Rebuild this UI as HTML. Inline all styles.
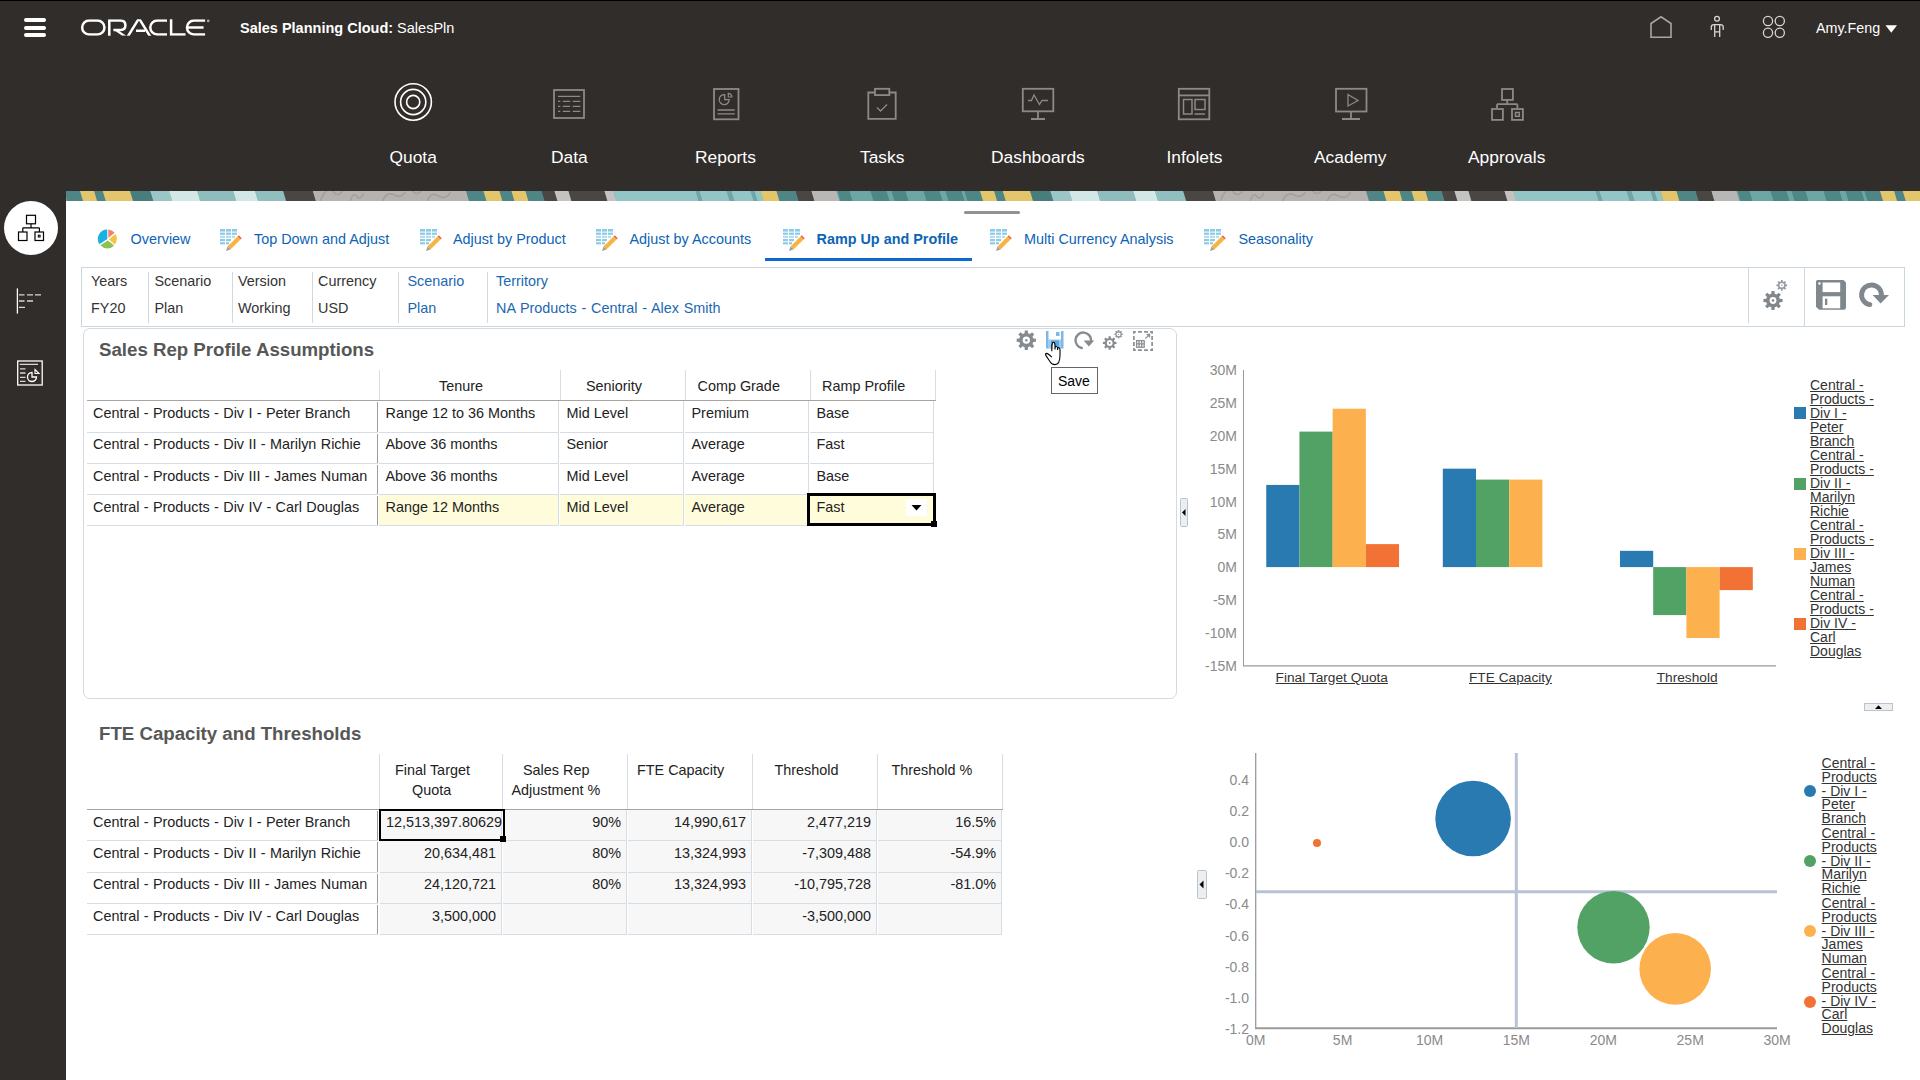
<!DOCTYPE html>
<html><head><meta charset="utf-8">
<style>
*{box-sizing:border-box}
html,body{margin:0;padding:0}
body{width:1920px;height:1080px;position:relative;overflow:hidden;background:#312d2a;font-family:"Liberation Sans",sans-serif;color:#000}
.a{position:absolute}
.t{position:absolute;white-space:nowrap;line-height:1}
svg{position:absolute;overflow:visible}
.nav{color:#fff;font-size:17.4px}
.tab{color:#0d63b5;font-size:14.4px}
.pov{font-size:14.4px;color:#333}
.cell{font-size:14.4px;color:#222}
</style></head><body>
<!-- top black line -->
<div class="a" style="left:0;top:0;width:1920px;height:1px;background:#000"></div>
<!-- hamburger -->
<div class="a" style="left:24px;top:18px;width:22px;height:4px;border-radius:2px;background:#fff"></div>
<div class="a" style="left:24px;top:25.5px;width:22px;height:4px;border-radius:2px;background:#fff"></div>
<div class="a" style="left:24px;top:33px;width:22px;height:4px;border-radius:2px;background:#fff"></div>
<!-- ORACLE logo -->
<svg style="left:0;top:0" width="260" height="60" fill="none" stroke="#fff" stroke-width="2.5">
<defs><clipPath id="lc"><rect x="70" y="19.3" width="150" height="16.4"/></clipPath></defs>
<g clip-path="url(#lc)">
<rect x="82.15" y="20.55" width="22.3" height="13.85" rx="6.9"/>
<path d="M109.3 36 V20.55 H120.6 Q125.4 20.55 125.4 25.3 Q125.4 30 120.6 30 H113.5"/>
<path d="M112.8 29.2 H116.6 L126.3 35.8 H122.2 Z" fill="#fff" stroke="none"/>
<path d="M127.5 37 L139 18.4 L150.5 37" stroke-linejoin="miter"/>
<path d="M136 30.8 H145.2"/>
<path d="M167 20.55 H157.2 A6.92 6.92 0 0 0 157.2 34.4 H167"/>
<path d="M171.1 19 V34.4 H185.5"/>
<path d="M205.1 20.55 H193.9 A6.92 6.92 0 0 0 193.9 34.4 H205.1 M187.2 27.6 H203.6"/>
</g>
<circle cx="208.2" cy="20.9" r="1.3" fill="#aaa" stroke="none"/>
</svg>
<div class="t" style="left:240px;top:21px;font-size:14.5px;color:#fff"><b>Sales Planning Cloud:</b> SalesPln</div>
<!-- header right icons -->
<svg style="left:0;top:0" width="1920" height="60" fill="none" stroke="#a9a5a1" stroke-width="1.6">
<path d="M1651 37.2 V23.5 L1661 16.8 L1671 23.5 V37.2 Z"/>
<circle cx="1717" cy="18.8" r="2.4" stroke="#d8d5d2" stroke-width="1.3"/>
<path d="M1711.3 30 V27 Q1711.3 24.6 1714 24.6 H1720.4 Q1723.2 24.6 1723.2 27 V30" stroke="#d8d5d2" stroke-width="1.3"/>
<path d="M1714.7 24.6 V37 M1719.7 24.6 V37 M1714.7 31.8 H1719.7" stroke="#d8d5d2" stroke-width="1.3"/>
<circle cx="1768" cy="21" r="4.6" stroke="#d8d5d2" stroke-width="1.3"/>
<circle cx="1779.8" cy="21" r="4.6" stroke="#d8d5d2" stroke-width="1.3"/>
<circle cx="1768" cy="32.8" r="4.6" stroke="#d8d5d2" stroke-width="1.3"/>
<circle cx="1779.8" cy="32.8" r="4.6" stroke="#d8d5d2" stroke-width="1.3"/>
<path d="M1885.5 25.3 H1897 L1891.25 32.8 Z" fill="#fff" stroke="none"/>
</svg>
<div class="t" style="left:1816px;top:20.5px;font-size:14.3px;color:#fff">Amy.Feng</div>

<!-- NAV ICONS -->
<svg style="left:0;top:0" width="1920" height="190" fill="none" stroke="#8e8985" stroke-width="1.8">
<g stroke="#fff" stroke-width="1.6">
<circle cx="413.2" cy="102" r="18.2"/><circle cx="413.2" cy="102" r="12.6"/><circle cx="413.2" cy="102" r="6.6"/>
</g>
<!-- Data -->
<rect x="554" y="90" width="30" height="28"/>
<path d="M558 96.4 H580.3 M558 101.4 H560.3 M562.8 101.4 H570.2 M572.7 101.4 H580.3 M558 106.4 H560.3 M562.8 106.4 H570.2 M572.7 106.4 H580.3 M558 111.4 H560.3 M562.8 111.4 H570.2 M572.7 111.4 H580.3" stroke-width="1.3"/>
<!-- Reports -->
<rect x="714" y="89" width="24.5" height="30.3"/>
<path d="M729.2 99.7 A5 5 0 1 1 724.7 94.7 V99.7 Z" stroke-width="1.3"/>
<path d="M728.3 97 V93.4 A3.6 3.6 0 0 1 731.9 97 Z" stroke-width="1.2"/>
<path d="M717.5 110 H734.8 M717.5 113.8 H734.8" stroke-width="1.3"/>
<!-- Tasks -->
<path d="M874.5 92.5 H868.3 V118.8 H895.7 V92.5 H889.5"/>
<rect x="875" y="88.8" width="14.3" height="6.3"/>
<path d="M877 107.5 L880.5 111 L887 104.5" stroke-width="1.3"/>
<!-- Dashboards -->
<rect x="1022.8" y="88.8" width="30.5" height="22.5"/>
<path d="M1038 111.5 V119 M1031 119 H1045"/>
<path d="M1028 100.5 H1031.5 L1034 95 L1039.5 104.5 L1042 100.5 H1048" stroke-width="1.3"/>
<!-- Infolets -->
<rect x="1178.8" y="88.8" width="30.5" height="30.5"/>
<path d="M1178.8 95.4 H1209.3"/>
<rect x="1183.5" y="99.5" width="8.5" height="14.5" stroke-width="1.5"/>
<rect x="1195" y="99.5" width="10" height="10" stroke-width="1.5"/>
<path d="M1194.5 114 H1205" stroke-width="1.5"/>
<!-- Academy -->
<rect x="1336" y="88.8" width="30.5" height="22.7"/>
<path d="M1351 111.5 V119 M1342 119 H1360"/>
<path d="M1348 94.5 L1358 100.5 L1348 106 Z" stroke-width="1.3"/>
<!-- Approvals -->
<rect x="1502" y="89" width="10.9" height="10.9"/>
<rect x="1492" y="109" width="10.9" height="10.9"/>
<rect x="1512" y="109" width="10.9" height="10.9"/>
<path d="M1507.2 100 V104.2 M1497 104.2 H1517.4 M1497 104.2 V108 M1517.4 104.2 V108"/>
<rect x="1515.5" y="112.5" width="3.8" height="3.8" stroke-width="1.5"/>
</svg>
<div class="t nav" style="left:389.5px;top:148.5px">Quota</div>
<div class="t nav" style="left:551px;top:148.5px">Data</div>
<div class="t nav" style="left:695px;top:148.5px">Reports</div>
<div class="t nav" style="left:860px;top:148.5px">Tasks</div>
<div class="t nav" style="left:991px;top:148.5px">Dashboards</div>
<div class="t nav" style="left:1166.5px;top:148.5px">Infolets</div>
<div class="t nav" style="left:1314px;top:148.5px">Academy</div>
<div class="t nav" style="left:1468px;top:148.5px">Approvals</div>

<!-- BANNER -->
<svg style="left:66px;top:191px;overflow:hidden" width="1854" height="10"><rect width="1854" height="10" fill="#6a9f9f"/>
<path d="M-1.5 0 H14.1 L17.1 10 H1.5 Z" fill="#4f8584"/>
<path d="M14.1 0 H28.2 L31.2 10 H17.1 Z" fill="#e3c66b"/>
<path d="M28.2 0 H36.8 L39.8 10 H31.2 Z" fill="#4f8584"/>
<path d="M36.8 0 H64.1 L67.1 10 H39.8 Z" fill="#e3c66b"/>
<path d="M64.1 0 H84.4 L87.4 10 H67.1 Z" fill="#497d7d"/>
<path d="M84.4 0 H103.2 L106.2 10 H87.4 Z" fill="#9cc5c6"/>
<path d="M103.2 0 H131.3 L134.3 10 H106.2 Z" fill="#d3e7e7"/>
<path d="M131.3 0 H167.2 L170.2 10 H134.3 Z" fill="#8fbcbc"/>
<path d="M167.2 0 H189.1 L192.1 10 H170.2 Z" fill="#d3e7e7"/>
<path d="M189.1 0 H217.2 L220.2 10 H192.1 Z" fill="#91bfbf"/>
<path d="M217.2 0 H246.9 L249.9 10 H220.2 Z" fill="#4a4644"/>
<path d="M246.9 0 H400.1 L403.1 10 H249.9 Z" fill="#b5b2af"/>
<path d="M400.1 0 H417.5 L420.5 10 H403.1 Z" fill="#4f8584"/>
<path d="M417.5 0 H433.5 L436.5 10 H420.5 Z" fill="#e3c66b"/>
<path d="M433.5 0 H445.5 L448.5 10 H436.5 Z" fill="#4f8584"/>
<path d="M445.5 0 H459.5 L462.5 10 H448.5 Z" fill="#e3c66b"/>
<path d="M459.5 0 H475.5 L478.5 10 H462.5 Z" fill="#4f8584"/>
<path d="M475.5 0 H488.5 L491.5 10 H478.5 Z" fill="#4a4644"/>
<path d="M488.5 0 H502.5 L505.5 10 H491.5 Z" fill="#c5c3c1"/>
<path d="M502.5 0 H538.5 L541.5 10 H505.5 Z" fill="#4a4644"/>
<path d="M538.5 0 H547.5 L550.5 10 H541.5 Z" fill="#c5c3c1"/>
<path d="M547.5 0 H694.5 L697.5 10 H550.5 Z" fill="#93c4c6"/>
<path d="M629.5 0 H633.5 L636.5 10 H632.5 Z" fill="#70a6a8"/>
<path d="M660.5 0 H665.5 L668.5 10 H663.5 Z" fill="#70a6a8"/>
<path d="M684.5 0 H688.5 L691.5 10 H687.5 Z" fill="#70a6a8"/>
<path d="M694.5 0 H710.5 L713.5 10 H697.5 Z" fill="#e3c66b"/>
<path d="M710.5 0 H729.5 L732.5 10 H713.5 Z" fill="#4f8584"/>
<path d="M729.5 0 H745.5 L748.5 10 H732.5 Z" fill="#4a4644"/>
<path d="M745.5 0 H770.5 L773.5 10 H748.5 Z" fill="#b9b7b5"/>
<path d="M770.5 0 H898.5 L901.5 10 H773.5 Z" fill="#6ea6a6"/>
<path d="M771.5 0 H783.5 L786.5 10 H774.5 Z" fill="#4f8686"/>
<path d="M804.5 0 H820.5 L823.5 10 H807.5 Z" fill="#4f8686"/>
<path d="M825.5 0 H839.5 L842.5 10 H828.5 Z" fill="#4f8686"/>
<path d="M857.5 0 H873.5 L876.5 10 H860.5 Z" fill="#4f8686"/>
<path d="M879.5 0 H895.5 L898.5 10 H882.5 Z" fill="#4f8686"/>
<path d="M898.5 0 H914.1 L917.1 10 H901.5 Z" fill="#4f8584"/>
<path d="M914.1 0 H928.2 L931.2 10 H917.1 Z" fill="#e3c66b"/>
<path d="M928.2 0 H936.8 L939.8 10 H931.2 Z" fill="#4f8584"/>
<path d="M936.8 0 H964.1 L967.1 10 H939.8 Z" fill="#e3c66b"/>
<path d="M964.1 0 H984.4 L987.4 10 H967.1 Z" fill="#497d7d"/>
<path d="M984.4 0 H1003.2 L1006.2 10 H987.4 Z" fill="#9cc5c6"/>
<path d="M1003.2 0 H1031.3 L1034.3 10 H1006.2 Z" fill="#d3e7e7"/>
<path d="M1031.3 0 H1067.2 L1070.2 10 H1034.3 Z" fill="#8fbcbc"/>
<path d="M1067.2 0 H1089.1 L1092.1 10 H1070.2 Z" fill="#d3e7e7"/>
<path d="M1089.1 0 H1117.2 L1120.2 10 H1092.1 Z" fill="#91bfbf"/>
<path d="M1117.2 0 H1146.9 L1149.9 10 H1120.2 Z" fill="#4a4644"/>
<path d="M1146.9 0 H1300.1 L1303.1 10 H1149.9 Z" fill="#b5b2af"/>
<path d="M1300.1 0 H1317.5 L1320.5 10 H1303.1 Z" fill="#4f8584"/>
<path d="M1317.5 0 H1333.5 L1336.5 10 H1320.5 Z" fill="#e3c66b"/>
<path d="M1333.5 0 H1345.5 L1348.5 10 H1336.5 Z" fill="#4f8584"/>
<path d="M1345.5 0 H1359.5 L1362.5 10 H1348.5 Z" fill="#e3c66b"/>
<path d="M1359.5 0 H1375.5 L1378.5 10 H1362.5 Z" fill="#4f8584"/>
<path d="M1375.5 0 H1388.5 L1391.5 10 H1378.5 Z" fill="#4a4644"/>
<path d="M1388.5 0 H1402.5 L1405.5 10 H1391.5 Z" fill="#c5c3c1"/>
<path d="M1402.5 0 H1438.5 L1441.5 10 H1405.5 Z" fill="#4a4644"/>
<path d="M1438.5 0 H1447.5 L1450.5 10 H1441.5 Z" fill="#c5c3c1"/>
<path d="M1447.5 0 H1594.5 L1597.5 10 H1450.5 Z" fill="#93c4c6"/>
<path d="M1529.5 0 H1533.5 L1536.5 10 H1532.5 Z" fill="#70a6a8"/>
<path d="M1560.5 0 H1565.5 L1568.5 10 H1563.5 Z" fill="#70a6a8"/>
<path d="M1584.5 0 H1588.5 L1591.5 10 H1587.5 Z" fill="#70a6a8"/>
<path d="M1594.5 0 H1610.5 L1613.5 10 H1597.5 Z" fill="#e3c66b"/>
<path d="M1610.5 0 H1629.5 L1632.5 10 H1613.5 Z" fill="#4f8584"/>
<path d="M1629.5 0 H1645.5 L1648.5 10 H1632.5 Z" fill="#4a4644"/>
<path d="M1645.5 0 H1670.5 L1673.5 10 H1648.5 Z" fill="#b9b7b5"/>
<path d="M1670.5 0 H1798.5 L1801.5 10 H1673.5 Z" fill="#6ea6a6"/>
<path d="M1671.5 0 H1683.5 L1686.5 10 H1674.5 Z" fill="#4f8686"/>
<path d="M1704.5 0 H1720.5 L1723.5 10 H1707.5 Z" fill="#4f8686"/>
<path d="M1725.5 0 H1739.5 L1742.5 10 H1728.5 Z" fill="#4f8686"/>
<path d="M1757.5 0 H1773.5 L1776.5 10 H1760.5 Z" fill="#4f8686"/>
<path d="M1779.5 0 H1795.5 L1798.5 10 H1782.5 Z" fill="#4f8686"/>
<path d="M1798.5 0 H1814.1 L1817.1 10 H1801.5 Z" fill="#4f8584"/>
<path d="M1814.1 0 H1828.2 L1831.2 10 H1817.1 Z" fill="#e3c66b"/>
<path d="M1828.2 0 H1836.8 L1839.8 10 H1831.2 Z" fill="#4f8584"/>
<path d="M1836.8 0 H1864.1 L1867.1 10 H1839.8 Z" fill="#e3c66b"/>
<g transform="translate(-1.5,0)" fill="none" stroke="#a3a19f" stroke-width="1.6"><path d="M256 10 Q258 3 262 0 M268 0 Q273 7 278 0 M286 10 Q288 1 292 5 Q296 10 299 2 M318 10 Q322 0 330 4 Q336 8 341 1 M348 0 Q352 5 357 0 M363 10 Q366 0 374 5 Q382 9 386 1"/></g>
<g transform="translate(898.5,0)" fill="none" stroke="#a3a19f" stroke-width="1.6"><path d="M256 10 Q258 3 262 0 M268 0 Q273 7 278 0 M286 10 Q288 1 292 5 Q296 10 299 2 M318 10 Q322 0 330 4 Q336 8 341 1 M348 0 Q352 5 357 0 M363 10 Q366 0 374 5 Q382 9 386 1"/></g>
<g transform="translate(1798.5,0)" fill="none" stroke="#a3a19f" stroke-width="1.6"><path d="M256 10 Q258 3 262 0 M268 0 Q273 7 278 0 M286 10 Q288 1 292 5 Q296 10 299 2 M318 10 Q322 0 330 4 Q336 8 341 1 M348 0 Q352 5 357 0 M363 10 Q366 0 374 5 Q382 9 386 1"/></g>
</svg>
<!-- CONTENT -->
<div id="content" class="a" style="left:66px;top:201px;width:1854px;height:879px;background:#fff"></div>

<!-- SIDEBAR -->
<div class="a" style="left:4px;top:201px;width:54px;height:54px;border-radius:50%;background:#fff"></div>
<svg style="left:0;top:0" width="66" height="400" fill="none" stroke="#000" stroke-width="1.2">
<rect x="26.5" y="215.3" width="9" height="8.5"/>
<rect x="18.5" y="232" width="8.5" height="8.5"/>
<rect x="35" y="232" width="8.5" height="8.5"/>
<rect x="38.3" y="235.2" width="1.8" height="1.8" stroke-width="1"/>
<path d="M31 223.8 V227.8 M22.8 227.8 H39.4 M22.8 227.8 V232 M39.4 227.8 V232"/>
<g stroke="#fff" stroke-width="1.3">
<path d="M17.4 288.4 V313.6"/>
<path d="M19 294.8 H24.5 M27 294.8 H33 M35 294.8 H41 M19 301 H24.5 M27 301 H33 M19 307.3 H25" stroke="#d9d6d3"/>
<rect x="17.7" y="361" width="24.5" height="24"/>
<path d="M19.8 364.3 H38 M20 368.9 H25.5 M20 373 H25.5 M20 377.3 H25.5 M20 381.3 H25.5" stroke="#d9d6d3"/>
<path d="M36.5 377 A4.5 4.5 0 1 1 32 372.5 V377 Z"/>
<path d="M35 369.5 L39 373.5 H35 Z" stroke-width="1.1"/>
</g>
</svg>


<!-- DRAG HANDLE -->
<div class="a" style="left:964px;top:211px;width:56px;height:3px;border-radius:2px;background:#929292"></div>
<!-- TABS -->
<svg style="left:0;top:0" width="1400" height="270">

<!-- overview pie -->
<g transform="translate(107.3,239)">
<path d="M0 0 L0 -9.4 A9.4 9.4 0 0 0 -7.9 5.2 Z" fill="#1ab0e2"/>
<path d="M1 -1 L1 -9.6 A9 9 0 0 1 7.3 -6.2 Z" fill="#ef8468"/>
<path d="M1.6 0.3 L8.2 -5 A9.2 9.2 0 0 1 7.4 5.4 Z" fill="#f6c244"/>
<path d="M0.6 1.4 L6.8 6.4 A9.2 9.2 0 0 1 -6.9 6.3 Z" fill="#8dc152"/>
</g>
<g transform="translate(220,229)">
<g fill="#8ccbe8">
<rect x="0" y="0" width="5" height="2.6"/><rect x="6" y="0" width="5" height="2.6"/><rect x="12" y="0" width="5" height="2.6"/>
<rect x="0" y="3.6" width="5" height="2.2"/><rect x="6" y="3.6" width="5" height="2.2"/><rect x="12" y="3.6" width="5" height="2.2"/>
<rect x="0" y="6.8" width="5" height="2.2" fill="#b5ddf0"/><rect x="6" y="6.8" width="5" height="2.2" fill="#b5ddf0"/><rect x="12" y="6.8" width="3" height="2.2" fill="#b5ddf0"/>
<rect x="0" y="10" width="5" height="2.2"/><rect x="6" y="10" width="5" height="2.2"/>
<rect x="0" y="13.2" width="5" height="2.2"/><rect x="6" y="13.2" width="3" height="2.2"/>
</g>
<path d="M7.5 17.5 L17.5 7.5 L20.5 10.5 L10.5 20.5 Z" fill="#f7b441"/>
<path d="M17.5 7.5 L18.8 6.2 L21.8 9.2 L20.5 10.5 Z" fill="#ee6a4a"/>
<path d="M7.5 17.5 L10.5 20.5 L6 22 Z" fill="#9aa0a6"/>
</g>
<g transform="translate(420,229)">
<g fill="#8ccbe8">
<rect x="0" y="0" width="5" height="2.6"/><rect x="6" y="0" width="5" height="2.6"/><rect x="12" y="0" width="5" height="2.6"/>
<rect x="0" y="3.6" width="5" height="2.2"/><rect x="6" y="3.6" width="5" height="2.2"/><rect x="12" y="3.6" width="5" height="2.2"/>
<rect x="0" y="6.8" width="5" height="2.2" fill="#b5ddf0"/><rect x="6" y="6.8" width="5" height="2.2" fill="#b5ddf0"/><rect x="12" y="6.8" width="3" height="2.2" fill="#b5ddf0"/>
<rect x="0" y="10" width="5" height="2.2"/><rect x="6" y="10" width="5" height="2.2"/>
<rect x="0" y="13.2" width="5" height="2.2"/><rect x="6" y="13.2" width="3" height="2.2"/>
</g>
<path d="M7.5 17.5 L17.5 7.5 L20.5 10.5 L10.5 20.5 Z" fill="#f7b441"/>
<path d="M17.5 7.5 L18.8 6.2 L21.8 9.2 L20.5 10.5 Z" fill="#ee6a4a"/>
<path d="M7.5 17.5 L10.5 20.5 L6 22 Z" fill="#9aa0a6"/>
</g>
<g transform="translate(596,229)">
<g fill="#8ccbe8">
<rect x="0" y="0" width="5" height="2.6"/><rect x="6" y="0" width="5" height="2.6"/><rect x="12" y="0" width="5" height="2.6"/>
<rect x="0" y="3.6" width="5" height="2.2"/><rect x="6" y="3.6" width="5" height="2.2"/><rect x="12" y="3.6" width="5" height="2.2"/>
<rect x="0" y="6.8" width="5" height="2.2" fill="#b5ddf0"/><rect x="6" y="6.8" width="5" height="2.2" fill="#b5ddf0"/><rect x="12" y="6.8" width="3" height="2.2" fill="#b5ddf0"/>
<rect x="0" y="10" width="5" height="2.2"/><rect x="6" y="10" width="5" height="2.2"/>
<rect x="0" y="13.2" width="5" height="2.2"/><rect x="6" y="13.2" width="3" height="2.2"/>
</g>
<path d="M7.5 17.5 L17.5 7.5 L20.5 10.5 L10.5 20.5 Z" fill="#f7b441"/>
<path d="M17.5 7.5 L18.8 6.2 L21.8 9.2 L20.5 10.5 Z" fill="#ee6a4a"/>
<path d="M7.5 17.5 L10.5 20.5 L6 22 Z" fill="#9aa0a6"/>
</g>
<g transform="translate(783,229)">
<g fill="#8ccbe8">
<rect x="0" y="0" width="5" height="2.6"/><rect x="6" y="0" width="5" height="2.6"/><rect x="12" y="0" width="5" height="2.6"/>
<rect x="0" y="3.6" width="5" height="2.2"/><rect x="6" y="3.6" width="5" height="2.2"/><rect x="12" y="3.6" width="5" height="2.2"/>
<rect x="0" y="6.8" width="5" height="2.2" fill="#b5ddf0"/><rect x="6" y="6.8" width="5" height="2.2" fill="#b5ddf0"/><rect x="12" y="6.8" width="3" height="2.2" fill="#b5ddf0"/>
<rect x="0" y="10" width="5" height="2.2"/><rect x="6" y="10" width="5" height="2.2"/>
<rect x="0" y="13.2" width="5" height="2.2"/><rect x="6" y="13.2" width="3" height="2.2"/>
</g>
<path d="M7.5 17.5 L17.5 7.5 L20.5 10.5 L10.5 20.5 Z" fill="#f7b441"/>
<path d="M17.5 7.5 L18.8 6.2 L21.8 9.2 L20.5 10.5 Z" fill="#ee6a4a"/>
<path d="M7.5 17.5 L10.5 20.5 L6 22 Z" fill="#9aa0a6"/>
</g>
<g transform="translate(990,229)">
<g fill="#8ccbe8">
<rect x="0" y="0" width="5" height="2.6"/><rect x="6" y="0" width="5" height="2.6"/><rect x="12" y="0" width="5" height="2.6"/>
<rect x="0" y="3.6" width="5" height="2.2"/><rect x="6" y="3.6" width="5" height="2.2"/><rect x="12" y="3.6" width="5" height="2.2"/>
<rect x="0" y="6.8" width="5" height="2.2" fill="#b5ddf0"/><rect x="6" y="6.8" width="5" height="2.2" fill="#b5ddf0"/><rect x="12" y="6.8" width="3" height="2.2" fill="#b5ddf0"/>
<rect x="0" y="10" width="5" height="2.2"/><rect x="6" y="10" width="5" height="2.2"/>
<rect x="0" y="13.2" width="5" height="2.2"/><rect x="6" y="13.2" width="3" height="2.2"/>
</g>
<path d="M7.5 17.5 L17.5 7.5 L20.5 10.5 L10.5 20.5 Z" fill="#f7b441"/>
<path d="M17.5 7.5 L18.8 6.2 L21.8 9.2 L20.5 10.5 Z" fill="#ee6a4a"/>
<path d="M7.5 17.5 L10.5 20.5 L6 22 Z" fill="#9aa0a6"/>
</g>
<g transform="translate(1204,229)">
<g fill="#8ccbe8">
<rect x="0" y="0" width="5" height="2.6"/><rect x="6" y="0" width="5" height="2.6"/><rect x="12" y="0" width="5" height="2.6"/>
<rect x="0" y="3.6" width="5" height="2.2"/><rect x="6" y="3.6" width="5" height="2.2"/><rect x="12" y="3.6" width="5" height="2.2"/>
<rect x="0" y="6.8" width="5" height="2.2" fill="#b5ddf0"/><rect x="6" y="6.8" width="5" height="2.2" fill="#b5ddf0"/><rect x="12" y="6.8" width="3" height="2.2" fill="#b5ddf0"/>
<rect x="0" y="10" width="5" height="2.2"/><rect x="6" y="10" width="5" height="2.2"/>
<rect x="0" y="13.2" width="5" height="2.2"/><rect x="6" y="13.2" width="3" height="2.2"/>
</g>
<path d="M7.5 17.5 L17.5 7.5 L20.5 10.5 L10.5 20.5 Z" fill="#f7b441"/>
<path d="M17.5 7.5 L18.8 6.2 L21.8 9.2 L20.5 10.5 Z" fill="#ee6a4a"/>
<path d="M7.5 17.5 L10.5 20.5 L6 22 Z" fill="#9aa0a6"/>
</g>
</svg>
<div class="t tab" style="left:130.5px;top:232px">Overview</div>
<div class="t tab" style="left:254px;top:232px">Top Down and Adjust</div>
<div class="t tab" style="left:453px;top:232px">Adjust by Product</div>
<div class="t tab" style="left:629.5px;top:232px">Adjust by Accounts</div>
<div class="t tab" style="left:816.5px;top:232px;font-weight:bold">Ramp Up and Profile</div>
<div class="t tab" style="left:1024px;top:232px">Multi Currency Analysis</div>
<div class="t tab" style="left:1238.5px;top:232px">Seasonality</div>
<div class="a" style="left:765px;top:258px;width:207px;height:3px;background:#0b6ad0"></div>

<!-- POV BAR -->
<div class="a" style="left:81px;top:267px;width:1824px;height:60px;border:1px solid #c9d5df"></div>
<div class="a" style="left:148px;top:272px;width:1px;height:51px;background:#cfd8e0"></div>
<div class="a" style="left:232px;top:272px;width:1px;height:51px;background:#cfd8e0"></div>
<div class="a" style="left:312px;top:272px;width:1px;height:51px;background:#cfd8e0"></div>
<div class="a" style="left:398px;top:272px;width:1px;height:51px;background:#cfd8e0"></div>
<div class="a" style="left:487px;top:272px;width:1px;height:51px;background:#cfd8e0"></div>
<div class="a" style="left:1748px;top:268px;width:1px;height:55px;background:#cfd8e0"></div>
<div class="a" style="left:1804px;top:268px;width:1px;height:58px;background:#cfd8e0"></div>
<div class="t pov" style="left:91px;top:274px">Years</div>
<div class="t pov" style="left:154.5px;top:274px">Scenario</div>
<div class="t pov" style="left:238px;top:274px">Version</div>
<div class="t pov" style="left:318px;top:274px">Currency</div>
<div class="t pov" style="left:407.5px;top:274px;color:#1c68b0">Scenario</div>
<div class="t pov" style="left:496px;top:274px;color:#1c68b0">Territory</div>
<div class="t pov" style="left:91px;top:301px">FY20</div>
<div class="t pov" style="left:154.5px;top:301px">Plan</div>
<div class="t pov" style="left:238px;top:301px">Working</div>
<div class="t pov" style="left:318px;top:301px">USD</div>
<div class="t pov" style="left:407.5px;top:301px;color:#1c68b0">Plan</div>
<div class="t pov" style="left:496px;top:301px;color:#1c68b0;word-spacing:0.75px">NA Products - Central - Alex Smith</div>
<svg style="left:0;top:0" width="1920" height="330" fill="#80878d">
<!-- gears -->
<path d="M1771.31 293.71 L1771.48 290.92 L1774.52 290.92 L1774.69 293.71 L1776.61 294.50 L1778.70 292.65 L1780.85 294.80 L1779.00 296.89 L1779.79 298.81 L1782.58 298.98 L1782.58 302.02 L1779.79 302.19 L1779.00 304.11 L1780.85 306.20 L1778.70 308.35 L1776.61 306.50 L1774.69 307.29 L1774.52 310.08 L1771.48 310.08 L1771.31 307.29 L1769.39 306.50 L1767.30 308.35 L1765.15 306.20 L1767.00 304.11 L1766.21 302.19 L1763.42 302.02 L1763.42 298.98 L1766.21 298.81 L1767.00 296.89 L1765.15 294.80 L1767.30 292.65 L1769.39 294.50 Z" fill="#80878d"/><circle cx="1773" cy="300.5" r="3.4" fill="#fff"/><circle cx="1773" cy="300.5" r="1.3" fill="#80878d"/>
<path d="M1780.86 281.52 L1780.96 279.97 L1782.64 279.97 L1782.74 281.52 L1783.81 281.96 L1784.97 280.93 L1786.17 282.13 L1785.14 283.29 L1785.58 284.36 L1787.13 284.46 L1787.13 286.14 L1785.58 286.24 L1785.14 287.31 L1786.17 288.47 L1784.97 289.67 L1783.81 288.64 L1782.74 289.08 L1782.64 290.63 L1780.96 290.63 L1780.86 289.08 L1779.79 288.64 L1778.63 289.67 L1777.43 288.47 L1778.46 287.31 L1778.02 286.24 L1776.47 286.14 L1776.47 284.46 L1778.02 284.36 L1778.46 283.29 L1777.43 282.13 L1778.63 280.93 L1779.79 281.96 Z" fill="#949a9f"/><circle cx="1781.8" cy="285.3" r="2.3" fill="#fff"/><circle cx="1781.8" cy="285.3" r="0.8" fill="#949a9f"/>
<!-- save -->
<path d="M1817.5 280 H1843.5 L1846 282.5 V307.5 Q1846 309.7 1843.8 309.7 H1819 L1816 306.7 V281.5 Q1816 280 1817.5 280 Z"/>
<rect x="1822.6" y="282.5" width="17.6" height="9.6" fill="#fff"/>
<rect x="1822.6" y="296.3" width="17.6" height="12" fill="#fff"/>
<rect x="1825" y="298.7" width="2.3" height="6.3"/>
<circle cx="1819.5" cy="283.5" r="1.2" fill="#fff"/>
<!-- refresh -->
<path d="M1869.8 304.6 A9.9 9.9 0 1 1 1881.4 295.1" fill="none" stroke="#80878d" stroke-width="4.9" stroke-linecap="round"/>
<path d="M1872.6 295.1 H1889 L1880.6 303.6 Z"/>
</svg>

<!-- PANEL 1 -->
<div class="a" style="left:83px;top:328px;width:1094px;height:371px;border:1px solid #d8d9da;border-radius:7px"></div>
<div class="t" style="left:99px;top:341px;font-size:18.67px;font-weight:bold;color:#575757">Sales Rep Profile Assumptions</div>

<!-- TABLE 1 -->
<div class="a" style="left:379px;top:370px;width:1px;height:30px;background:#d5dde6"></div>
<div class="a" style="left:560px;top:370px;width:1px;height:30px;background:#d5dde6"></div>
<div class="a" style="left:685px;top:370px;width:1px;height:30px;background:#d5dde6"></div>
<div class="a" style="left:810px;top:370px;width:1px;height:30px;background:#d5dde6"></div>
<div class="a" style="left:935px;top:370px;width:1px;height:30px;background:#d5dde6"></div>
<div class="a" style="left:87px;top:400px;width:849px;height:1px;background:#a9a39e"></div>
<div class="t cell" style="left:439px;top:379px">Tenure</div>
<div class="t cell" style="left:586px;top:379px">Seniority</div>
<div class="t cell" style="left:697.5px;top:379px">Comp Grade</div>
<div class="t cell" style="left:822px;top:379px">Ramp Profile</div>
<div class="a" style="left:87px;top:401px;width:291px;height:32px;border-bottom:1px solid #d5dde6"></div>
<div class="a" style="left:377px;top:402px;width:1px;height:30px;background:#a19a95"></div>
<div class="t cell" style="left:93px;top:406px;word-spacing:0.38px">Central - Products - Div I - Peter Branch</div>
<div class="a" style="left:379px;top:401px;width:180px;height:32px;background:#fff;border-right:1px solid #d5dde6;border-bottom:1px solid #d5dde6"></div>
<div class="t cell" style="left:385.5px;top:406px">Range 12 to 36 Months</div>
<div class="a" style="left:560px;top:401px;width:124px;height:32px;background:#fff;border-right:1px solid #d5dde6;border-bottom:1px solid #d5dde6"></div>
<div class="t cell" style="left:566.5px;top:406px">Mid Level</div>
<div class="a" style="left:685px;top:401px;width:124px;height:32px;background:#fff;border-right:1px solid #d5dde6;border-bottom:1px solid #d5dde6"></div>
<div class="t cell" style="left:691.5px;top:406px">Premium</div>
<div class="a" style="left:810px;top:401px;width:124px;height:32px;background:#fff;border-right:1px solid #d5dde6;border-bottom:1px solid #d5dde6"></div>
<div class="t cell" style="left:816.5px;top:406px">Base</div>
<div class="a" style="left:87px;top:433px;width:291px;height:31px;border-bottom:1px solid #d5dde6"></div>
<div class="a" style="left:377px;top:434px;width:1px;height:29px;background:#a19a95"></div>
<div class="t cell" style="left:93px;top:437px;word-spacing:0.38px">Central - Products - Div II - Marilyn Richie</div>
<div class="a" style="left:379px;top:433px;width:180px;height:31px;background:#fff;border-right:1px solid #d5dde6;border-bottom:1px solid #d5dde6"></div>
<div class="t cell" style="left:385.5px;top:437px">Above 36 months</div>
<div class="a" style="left:560px;top:433px;width:124px;height:31px;background:#fff;border-right:1px solid #d5dde6;border-bottom:1px solid #d5dde6"></div>
<div class="t cell" style="left:566.5px;top:437px">Senior</div>
<div class="a" style="left:685px;top:433px;width:124px;height:31px;background:#fff;border-right:1px solid #d5dde6;border-bottom:1px solid #d5dde6"></div>
<div class="t cell" style="left:691.5px;top:437px">Average</div>
<div class="a" style="left:810px;top:433px;width:124px;height:31px;background:#fff;border-right:1px solid #d5dde6;border-bottom:1px solid #d5dde6"></div>
<div class="t cell" style="left:816.5px;top:437px">Fast</div>
<div class="a" style="left:87px;top:464px;width:291px;height:31px;border-bottom:1px solid #d5dde6"></div>
<div class="a" style="left:377px;top:465px;width:1px;height:29px;background:#a19a95"></div>
<div class="t cell" style="left:93px;top:469px;word-spacing:0.38px">Central - Products - Div III - James Numan</div>
<div class="a" style="left:379px;top:464px;width:180px;height:31px;background:#fff;border-right:1px solid #d5dde6;border-bottom:1px solid #d5dde6"></div>
<div class="t cell" style="left:385.5px;top:469px">Above 36 months</div>
<div class="a" style="left:560px;top:464px;width:124px;height:31px;background:#fff;border-right:1px solid #d5dde6;border-bottom:1px solid #d5dde6"></div>
<div class="t cell" style="left:566.5px;top:469px">Mid Level</div>
<div class="a" style="left:685px;top:464px;width:124px;height:31px;background:#fff;border-right:1px solid #d5dde6;border-bottom:1px solid #d5dde6"></div>
<div class="t cell" style="left:691.5px;top:469px">Average</div>
<div class="a" style="left:810px;top:464px;width:124px;height:31px;background:#fff;border-right:1px solid #d5dde6;border-bottom:1px solid #d5dde6"></div>
<div class="t cell" style="left:816.5px;top:469px">Base</div>
<div class="a" style="left:87px;top:495px;width:291px;height:31px;border-bottom:1px solid #d5dde6"></div>
<div class="a" style="left:377px;top:496px;width:1px;height:29px;background:#a19a95"></div>
<div class="t cell" style="left:93px;top:500px;word-spacing:0.38px">Central - Products - Div IV - Carl Douglas</div>
<div class="a" style="left:379px;top:495px;width:180px;height:31px;background:#fffcdc;border-right:1px solid #d5dde6;border-bottom:1px solid #d5dde6"></div>
<div class="t cell" style="left:385.5px;top:500px">Range 12 Months</div>
<div class="a" style="left:560px;top:495px;width:124px;height:31px;background:#fffcdc;border-right:1px solid #d5dde6;border-bottom:1px solid #d5dde6"></div>
<div class="t cell" style="left:566.5px;top:500px">Mid Level</div>
<div class="a" style="left:685px;top:495px;width:124px;height:31px;background:#fffcdc;border-right:1px solid #d5dde6;border-bottom:1px solid #d5dde6"></div>
<div class="t cell" style="left:691.5px;top:500px">Average</div>
<div class="a" style="left:810px;top:495px;width:124px;height:31px;background:#fffcdc;border-right:1px solid #d5dde6;border-bottom:1px solid #d5dde6"></div>
<div class="t cell" style="left:816.5px;top:500px">Fast</div>
<div class="a" style="left:807px;top:493px;width:129px;height:33px;border:3px solid #000"></div>
<div class="a" style="left:931px;top:521px;width:6px;height:6px;background:#000"></div>
<div class="a" style="left:906px;top:499px;width:21px;height:16.5px;background:#fff"></div>
<svg style="left:0;top:0" width="1920" height="1080">
<path d="M911.5 505 H921.5 L916.5 510.5 Z" fill="#000"/>
<path d="M1024.56 333.21 L1024.77 330.52 L1027.83 330.52 L1028.04 333.21 L1030.01 334.03 L1032.06 332.27 L1034.23 334.44 L1032.47 336.49 L1033.29 338.46 L1035.98 338.67 L1035.98 341.73 L1033.29 341.94 L1032.47 343.91 L1034.23 345.96 L1032.06 348.13 L1030.01 346.37 L1028.04 347.19 L1027.83 349.88 L1024.77 349.88 L1024.56 347.19 L1022.59 346.37 L1020.54 348.13 L1018.37 345.96 L1020.13 343.91 L1019.31 341.94 L1016.62 341.73 L1016.62 338.67 L1019.31 338.46 L1020.13 336.49 L1018.37 334.44 L1020.54 332.27 L1022.59 334.03 Z" fill="#868b90"/><circle cx="1026.3" cy="340.2" r="3.6" fill="#fff"/><circle cx="1026.3" cy="340.2" r="1.2" fill="#868b90"/>
<g fill="#7fb8e6"><rect x="1046" y="331" width="2.5" height="17.5"/><rect x="1061" y="331" width="2.5" height="17.5"/><rect x="1048" y="339.5" width="13" height="9" fill="#9ecbef"/><rect x="1056" y="332" width="3.5" height="4"/><rect x="1051" y="340.5" width="8" height="6" fill="#5aa3dc"/></g>
<path d="M1051.8 344.5 V351.2 M1052 346 Q1052 342.3 1053.5 342.3 Q1055 342.3 1055 345.5 V349.5 M1055 348 Q1055 346.5 1056.3 346.5 Q1057.6 346.5 1057.6 348.5 V350 M1057.6 349 Q1057.6 347.6 1058.8 347.6 Q1060 347.6 1060 349.8 V355 Q1060 364.6 1055 364.6 Q1051.6 364.6 1049.6 361 L1045.8 355.4 Q1045 353.6 1046.6 353.4 Q1048 353.4 1051.8 357.2" fill="#fff" stroke="#000" stroke-width="1.1" stroke-linejoin="round"/>
<path d="M1081.8 348 A7.8 7.8 0 1 1 1091.1 340.6" fill="none" stroke="#868b90" stroke-width="2.4" stroke-linecap="round"/><path d="M1083.6 340.6 H1094.2 L1088.9 346.6 Z" fill="#868b90"/>
<path d="M1108.49 338.15 L1108.62 336.18 L1110.78 336.18 L1110.91 338.15 L1112.28 338.72 L1113.76 337.42 L1115.28 338.94 L1113.98 340.42 L1114.55 341.79 L1116.52 341.92 L1116.52 344.08 L1114.55 344.21 L1113.98 345.58 L1115.28 347.06 L1113.76 348.58 L1112.28 347.28 L1110.91 347.85 L1110.78 349.82 L1108.62 349.82 L1108.49 347.85 L1107.12 347.28 L1105.64 348.58 L1104.12 347.06 L1105.42 345.58 L1104.85 344.21 L1102.88 344.08 L1102.88 341.92 L1104.85 341.79 L1105.42 340.42 L1104.12 338.94 L1105.64 337.42 L1107.12 338.72 Z" fill="#868b90"/><circle cx="1109.7" cy="343" r="2.9" fill="#fff"/><circle cx="1109.7" cy="343" r="0.9" fill="#868b90"/>
<path d="M1117.83 331.19 L1117.93 330.05 L1119.27 330.05 L1119.37 331.19 L1120.25 331.56 L1121.13 330.82 L1122.08 331.77 L1121.34 332.65 L1121.71 333.53 L1122.85 333.63 L1122.85 334.97 L1121.71 335.07 L1121.34 335.95 L1122.08 336.83 L1121.13 337.78 L1120.25 337.04 L1119.37 337.41 L1119.27 338.55 L1117.93 338.55 L1117.83 337.41 L1116.95 337.04 L1116.07 337.78 L1115.12 336.83 L1115.86 335.95 L1115.49 335.07 L1114.35 334.97 L1114.35 333.63 L1115.49 333.53 L1115.86 332.65 L1115.12 331.77 L1116.07 330.82 L1116.95 331.56 Z" fill="#8f959a"/><circle cx="1118.6" cy="334.3" r="1.9" fill="#fff"/><circle cx="1118.6" cy="334.3" r="0.6" fill="#8f959a"/>
<rect x="1133.9" y="331.9" width="18.2" height="18.2" fill="none" stroke="#8a9096" stroke-width="1.7" stroke-dasharray="3.9 2.17" stroke-dashoffset="1.95"/>
<g fill="none" stroke="#8a9096" stroke-width="1.3"><rect x="1136.6" y="340.6" width="7.6" height="6.6"/><path d="M1139.1 340.6 V347.2 M1141.7 340.6 V347.2 M1136.6 343.9 H1144.2 M1145.3 338.6 L1149 334.9"/></g><path d="M1150.3 333.6 L1150 338 L1146 334 Z" fill="#8a9096"/>
<rect x="1051.5" y="367.5" width="46" height="26" fill="#fff" stroke="#646464" stroke-width="1"/>
<rect x="1180.5" y="498.5" width="7" height="28" rx="1" fill="#eceef0" stroke="#b9c4d0"/><path d="M1182 512.5 L1185.5 509 V516 Z" fill="#000"/>
<rect x="1197.5" y="870.5" width="9" height="28" rx="1" fill="#eceef0" stroke="#b9c4d0"/><path d="M1199.5 884.5 L1203.5 880.5 V888.5 Z" fill="#000"/>
</svg>
<div class="t" style="left:1058px;top:374px;font-size:14px;color:#000">Save</div>
<svg style="left:0;top:0" width="1920" height="1080">
<path d="M1243.5 370 V666" stroke="#9a9a9a" stroke-width="1"/>
<path d="M1243 665.8 H1776" stroke="#9a9a9a" stroke-width="1.3"/>
<rect x="1266.25" y="484.93" width="33.20" height="82.17" fill="#2a7ab2"/>
<rect x="1299.45" y="431.60" width="33.20" height="135.50" fill="#52a165"/>
<rect x="1332.65" y="408.70" width="33.20" height="158.40" fill="#fdb14e"/>
<rect x="1365.85" y="544.12" width="33.20" height="22.98" fill="#f27236"/>
<rect x="1442.80" y="468.66" width="33.20" height="98.44" fill="#2a7ab2"/>
<rect x="1476.00" y="479.59" width="33.20" height="87.51" fill="#52a165"/>
<rect x="1509.20" y="479.59" width="33.20" height="87.51" fill="#fdb14e"/>
<rect x="1620.00" y="550.83" width="33.20" height="16.27" fill="#2a7ab2"/>
<rect x="1653.20" y="567.10" width="33.20" height="48.00" fill="#52a165"/>
<rect x="1686.40" y="567.10" width="33.20" height="70.90" fill="#fdb14e"/>
<rect x="1719.60" y="567.10" width="33.20" height="22.98" fill="#f27236"/>
</svg>
<div class="t" style="right:683px;top:363.1px;font-size:14px;color:#8a8a8a">30M</div>
<div class="t" style="right:683px;top:395.9px;font-size:14px;color:#8a8a8a">25M</div>
<div class="t" style="right:683px;top:428.8px;font-size:14px;color:#8a8a8a">20M</div>
<div class="t" style="right:683px;top:461.6px;font-size:14px;color:#8a8a8a">15M</div>
<div class="t" style="right:683px;top:494.5px;font-size:14px;color:#8a8a8a">10M</div>
<div class="t" style="right:683px;top:527.3px;font-size:14px;color:#8a8a8a">5M</div>
<div class="t" style="right:683px;top:560.1px;font-size:14px;color:#8a8a8a">0M</div>
<div class="t" style="right:683px;top:593.0px;font-size:14px;color:#8a8a8a">-5M</div>
<div class="t" style="right:683px;top:625.8px;font-size:14px;color:#8a8a8a">-10M</div>
<div class="t" style="right:683px;top:658.7px;font-size:14px;color:#8a8a8a">-15M</div>
<div class="t" style="left:1275.6px;top:671px;font-size:13.7px;color:#333;text-decoration:underline">Final Target Quota</div>
<div class="t" style="left:1469px;top:671px;font-size:13.7px;color:#333;text-decoration:underline">FTE Capacity</div>
<div class="t" style="left:1656.7px;top:671px;font-size:13.7px;color:#333;text-decoration:underline">Threshold</div>
<div class="a" style="left:1794px;top:407.2px;width:12px;height:12px;background:#2a7ab2"></div>
<div class="t" style="left:1810px;top:378.0px;font-size:14px;color:#333;text-decoration:underline;line-height:14px">Central -</div>
<div class="t" style="left:1810px;top:391.9px;font-size:14px;color:#333;text-decoration:underline;line-height:14px">Products -</div>
<div class="t" style="left:1810px;top:405.8px;font-size:14px;color:#333;text-decoration:underline;line-height:14px">Div I -</div>
<div class="t" style="left:1810px;top:419.6px;font-size:14px;color:#333;text-decoration:underline;line-height:14px">Peter</div>
<div class="t" style="left:1810px;top:433.5px;font-size:14px;color:#333;text-decoration:underline;line-height:14px">Branch</div>
<div class="a" style="left:1794px;top:477.5px;width:12px;height:12px;background:#52a165"></div>
<div class="t" style="left:1810px;top:448.1px;font-size:14px;color:#333;text-decoration:underline;line-height:14px">Central -</div>
<div class="t" style="left:1810px;top:462.0px;font-size:14px;color:#333;text-decoration:underline;line-height:14px">Products -</div>
<div class="t" style="left:1810px;top:475.9px;font-size:14px;color:#333;text-decoration:underline;line-height:14px">Div II -</div>
<div class="t" style="left:1810px;top:489.7px;font-size:14px;color:#333;text-decoration:underline;line-height:14px">Marilyn</div>
<div class="t" style="left:1810px;top:503.6px;font-size:14px;color:#333;text-decoration:underline;line-height:14px">Richie</div>
<div class="a" style="left:1794px;top:547.8px;width:12px;height:12px;background:#fdb14e"></div>
<div class="t" style="left:1810px;top:518.2px;font-size:14px;color:#333;text-decoration:underline;line-height:14px">Central -</div>
<div class="t" style="left:1810px;top:532.1px;font-size:14px;color:#333;text-decoration:underline;line-height:14px">Products -</div>
<div class="t" style="left:1810px;top:546.0px;font-size:14px;color:#333;text-decoration:underline;line-height:14px">Div III -</div>
<div class="t" style="left:1810px;top:559.8px;font-size:14px;color:#333;text-decoration:underline;line-height:14px">James</div>
<div class="t" style="left:1810px;top:573.7px;font-size:14px;color:#333;text-decoration:underline;line-height:14px">Numan</div>
<div class="a" style="left:1794px;top:618.1px;width:12px;height:12px;background:#f27236"></div>
<div class="t" style="left:1810px;top:588.3px;font-size:14px;color:#333;text-decoration:underline;line-height:14px">Central -</div>
<div class="t" style="left:1810px;top:602.2px;font-size:14px;color:#333;text-decoration:underline;line-height:14px">Products -</div>
<div class="t" style="left:1810px;top:616.1px;font-size:14px;color:#333;text-decoration:underline;line-height:14px">Div IV -</div>
<div class="t" style="left:1810px;top:629.9px;font-size:14px;color:#333;text-decoration:underline;line-height:14px">Carl</div>
<div class="t" style="left:1810px;top:643.8px;font-size:14px;color:#333;text-decoration:underline;line-height:14px">Douglas</div>
<div class="a" style="left:1864px;top:703px;width:29px;height:8px;background:#eceef0;border:1px solid #b9c4d0"></div>
<svg style="left:0;top:0" width="1" height="1"><path d="M1875 709 L1878.5 705.2 L1882 709 Z" fill="#000"/></svg>
<div class="t" style="left:99px;top:725px;font-size:18.67px;font-weight:bold;color:#575757">FTE Capacity and Thresholds</div>
<div class="a" style="left:379px;top:754px;width:1px;height:55px;background:#d5dde6"></div>
<div class="a" style="left:502px;top:754px;width:1px;height:55px;background:#d5dde6"></div>
<div class="a" style="left:627px;top:754px;width:1px;height:55px;background:#d5dde6"></div>
<div class="a" style="left:752px;top:754px;width:1px;height:55px;background:#d5dde6"></div>
<div class="a" style="left:877px;top:754px;width:1px;height:55px;background:#d5dde6"></div>
<div class="a" style="left:1002px;top:754px;width:1px;height:55px;background:#d5dde6"></div>
<div class="a" style="left:87px;top:809px;width:916px;height:1px;background:#a9a39e"></div>
<div class="t cell" style="left:395px;top:763px">Final Target</div>
<div class="t cell" style="left:412px;top:783px">Quota</div>
<div class="t cell" style="left:523px;top:763px">Sales Rep</div>
<div class="t cell" style="left:511.5px;top:783px">Adjustment %</div>
<div class="t cell" style="left:637px;top:763px">FTE Capacity</div>
<div class="t cell" style="left:774.5px;top:763px">Threshold</div>
<div class="t cell" style="left:891.5px;top:763px">Threshold %</div>
<div class="a" style="left:87px;top:810px;width:291px;height:31px;border-bottom:1px solid #d5dde6"></div>
<div class="a" style="left:377px;top:811px;width:1px;height:29px;background:#a19a95"></div>
<div class="t cell" style="left:93px;top:814.8px;word-spacing:0.38px">Central - Products - Div I - Peter Branch</div>
<div class="a" style="left:380px;top:810px;width:122px;height:31px;background:#f7f7f7;border-right:1px solid #d5dde6;border-bottom:1px solid #d5dde6"></div>
<div class="t cell" style="left:386px;top:814.8px">12,513,397.80629</div>
<div class="a" style="left:503px;top:810px;width:124px;height:31px;background:#f7f7f7;border-right:1px solid #d5dde6;border-bottom:1px solid #d5dde6"></div>
<div class="t cell" style="right:1299px;top:814.8px">90%</div>
<div class="a" style="left:628px;top:810px;width:124px;height:31px;background:#f7f7f7;border-right:1px solid #d5dde6;border-bottom:1px solid #d5dde6"></div>
<div class="t cell" style="right:1174px;top:814.8px">14,990,617</div>
<div class="a" style="left:753px;top:810px;width:124px;height:31px;background:#f7f7f7;border-right:1px solid #d5dde6;border-bottom:1px solid #d5dde6"></div>
<div class="t cell" style="right:1049px;top:814.8px">2,477,219</div>
<div class="a" style="left:878px;top:810px;width:124px;height:31px;background:#f7f7f7;border-right:1px solid #d5dde6;border-bottom:1px solid #d5dde6"></div>
<div class="t cell" style="right:924px;top:814.8px">16.5%</div>
<div class="a" style="left:87px;top:841px;width:291px;height:32px;border-bottom:1px solid #d5dde6"></div>
<div class="a" style="left:377px;top:842px;width:1px;height:30px;background:#a19a95"></div>
<div class="t cell" style="left:93px;top:845.8px;word-spacing:0.38px">Central - Products - Div II - Marilyn Richie</div>
<div class="a" style="left:380px;top:841px;width:122px;height:32px;background:#f7f7f7;border-right:1px solid #d5dde6;border-bottom:1px solid #d5dde6"></div>
<div class="t cell" style="right:1424px;top:845.8px">20,634,481</div>
<div class="a" style="left:503px;top:841px;width:124px;height:32px;background:#f7f7f7;border-right:1px solid #d5dde6;border-bottom:1px solid #d5dde6"></div>
<div class="t cell" style="right:1299px;top:845.8px">80%</div>
<div class="a" style="left:628px;top:841px;width:124px;height:32px;background:#f7f7f7;border-right:1px solid #d5dde6;border-bottom:1px solid #d5dde6"></div>
<div class="t cell" style="right:1174px;top:845.8px">13,324,993</div>
<div class="a" style="left:753px;top:841px;width:124px;height:32px;background:#f7f7f7;border-right:1px solid #d5dde6;border-bottom:1px solid #d5dde6"></div>
<div class="t cell" style="right:1049px;top:845.8px">-7,309,488</div>
<div class="a" style="left:878px;top:841px;width:124px;height:32px;background:#f7f7f7;border-right:1px solid #d5dde6;border-bottom:1px solid #d5dde6"></div>
<div class="t cell" style="right:924px;top:845.8px">-54.9%</div>
<div class="a" style="left:87px;top:873px;width:291px;height:31px;border-bottom:1px solid #d5dde6"></div>
<div class="a" style="left:377px;top:874px;width:1px;height:29px;background:#a19a95"></div>
<div class="t cell" style="left:93px;top:876.8px;word-spacing:0.38px">Central - Products - Div III - James Numan</div>
<div class="a" style="left:380px;top:873px;width:122px;height:31px;background:#f7f7f7;border-right:1px solid #d5dde6;border-bottom:1px solid #d5dde6"></div>
<div class="t cell" style="right:1424px;top:876.8px">24,120,721</div>
<div class="a" style="left:503px;top:873px;width:124px;height:31px;background:#f7f7f7;border-right:1px solid #d5dde6;border-bottom:1px solid #d5dde6"></div>
<div class="t cell" style="right:1299px;top:876.8px">80%</div>
<div class="a" style="left:628px;top:873px;width:124px;height:31px;background:#f7f7f7;border-right:1px solid #d5dde6;border-bottom:1px solid #d5dde6"></div>
<div class="t cell" style="right:1174px;top:876.8px">13,324,993</div>
<div class="a" style="left:753px;top:873px;width:124px;height:31px;background:#f7f7f7;border-right:1px solid #d5dde6;border-bottom:1px solid #d5dde6"></div>
<div class="t cell" style="right:1049px;top:876.8px">-10,795,728</div>
<div class="a" style="left:878px;top:873px;width:124px;height:31px;background:#f7f7f7;border-right:1px solid #d5dde6;border-bottom:1px solid #d5dde6"></div>
<div class="t cell" style="right:924px;top:876.8px">-81.0%</div>
<div class="a" style="left:87px;top:904px;width:291px;height:31px;border-bottom:1px solid #d5dde6"></div>
<div class="a" style="left:377px;top:905px;width:1px;height:29px;background:#a19a95"></div>
<div class="t cell" style="left:93px;top:908.8px;word-spacing:0.38px">Central - Products - Div IV - Carl Douglas</div>
<div class="a" style="left:380px;top:904px;width:122px;height:31px;background:#f7f7f7;border-right:1px solid #d5dde6;border-bottom:1px solid #d5dde6"></div>
<div class="t cell" style="right:1424px;top:908.8px">3,500,000</div>
<div class="a" style="left:503px;top:904px;width:124px;height:31px;background:#f7f7f7;border-right:1px solid #d5dde6;border-bottom:1px solid #d5dde6"></div>
<div class="a" style="left:628px;top:904px;width:124px;height:31px;background:#f7f7f7;border-right:1px solid #d5dde6;border-bottom:1px solid #d5dde6"></div>
<div class="a" style="left:753px;top:904px;width:124px;height:31px;background:#f7f7f7;border-right:1px solid #d5dde6;border-bottom:1px solid #d5dde6"></div>
<div class="t cell" style="right:1049px;top:908.8px">-3,500,000</div>
<div class="a" style="left:878px;top:904px;width:124px;height:31px;background:#f7f7f7;border-right:1px solid #d5dde6;border-bottom:1px solid #d5dde6"></div>
<div class="a" style="left:379px;top:809px;width:126px;height:32px;border:2px solid #000"></div>
<div class="a" style="left:500px;top:836px;width:6px;height:6px;background:#000"></div>
<svg style="left:0;top:0" width="1920" height="1080">
<path d="M1255.7 753 V1029" stroke="#9a9a9a" stroke-width="1.3"/>
<path d="M1255 1028.3 H1777" stroke="#9a9a9a" stroke-width="2"/>
<path d="M1256 891.7 H1777" stroke="#b7c3d5" stroke-width="3"/>
<path d="M1516.3 753 V1028" stroke="#b7c3d5" stroke-width="3"/>
<circle cx="1473.1" cy="818.5" r="37.8" fill="#2a7ab2"/>
<circle cx="1613.5" cy="927.3" r="36.2" fill="#52a165"/>
<circle cx="1675.2" cy="968.9" r="35.8" fill="#fdb14e"/>
<circle cx="1317" cy="843.1" r="4" fill="#f27236"/>
</svg>
<div class="t" style="right:671px;top:773.0px;font-size:14px;color:#8a8a8a">0.4</div>
<div class="t" style="right:671px;top:804.1px;font-size:14px;color:#8a8a8a">0.2</div>
<div class="t" style="right:671px;top:835.2px;font-size:14px;color:#8a8a8a">0.0</div>
<div class="t" style="right:671px;top:866.3px;font-size:14px;color:#8a8a8a">-0.2</div>
<div class="t" style="right:671px;top:897.4px;font-size:14px;color:#8a8a8a">-0.4</div>
<div class="t" style="right:671px;top:928.5px;font-size:14px;color:#8a8a8a">-0.6</div>
<div class="t" style="right:671px;top:959.6px;font-size:14px;color:#8a8a8a">-0.8</div>
<div class="t" style="right:671px;top:990.7px;font-size:14px;color:#8a8a8a">-1.0</div>
<div class="t" style="right:671px;top:1021.8px;font-size:14px;color:#8a8a8a">-1.2</div>
<div class="t" style="left:1215.7px;width:80px;text-align:center;top:1033px;font-size:14px;color:#8a8a8a">0M</div>
<div class="t" style="left:1302.6000000000001px;width:80px;text-align:center;top:1033px;font-size:14px;color:#8a8a8a">5M</div>
<div class="t" style="left:1389.5px;width:80px;text-align:center;top:1033px;font-size:14px;color:#8a8a8a">10M</div>
<div class="t" style="left:1476.4px;width:80px;text-align:center;top:1033px;font-size:14px;color:#8a8a8a">15M</div>
<div class="t" style="left:1563.3000000000002px;width:80px;text-align:center;top:1033px;font-size:14px;color:#8a8a8a">20M</div>
<div class="t" style="left:1650.2px;width:80px;text-align:center;top:1033px;font-size:14px;color:#8a8a8a">25M</div>
<div class="t" style="left:1737.1000000000001px;width:80px;text-align:center;top:1033px;font-size:14px;color:#8a8a8a">30M</div>
<div class="a" style="left:1804px;top:784.5px;width:12px;height:12px;border-radius:50%;background:#2a7ab2"></div>
<div class="t" style="left:1821.6px;top:756.0px;font-size:14px;color:#333;text-decoration:underline;line-height:14px">Central -</div>
<div class="t" style="left:1821.6px;top:769.8px;font-size:14px;color:#333;text-decoration:underline;line-height:14px">Products</div>
<div class="t" style="left:1821.6px;top:783.5px;font-size:14px;color:#333;text-decoration:underline;line-height:14px">- Div I -</div>
<div class="t" style="left:1821.6px;top:797.2px;font-size:14px;color:#333;text-decoration:underline;line-height:14px">Peter</div>
<div class="t" style="left:1821.6px;top:811.0px;font-size:14px;color:#333;text-decoration:underline;line-height:14px">Branch</div>
<div class="a" style="left:1804px;top:854.9px;width:12px;height:12px;border-radius:50%;background:#52a165"></div>
<div class="t" style="left:1821.6px;top:826.0px;font-size:14px;color:#333;text-decoration:underline;line-height:14px">Central -</div>
<div class="t" style="left:1821.6px;top:839.8px;font-size:14px;color:#333;text-decoration:underline;line-height:14px">Products</div>
<div class="t" style="left:1821.6px;top:853.5px;font-size:14px;color:#333;text-decoration:underline;line-height:14px">- Div II -</div>
<div class="t" style="left:1821.6px;top:867.2px;font-size:14px;color:#333;text-decoration:underline;line-height:14px">Marilyn</div>
<div class="t" style="left:1821.6px;top:881.0px;font-size:14px;color:#333;text-decoration:underline;line-height:14px">Richie</div>
<div class="a" style="left:1804px;top:925.3px;width:12px;height:12px;border-radius:50%;background:#fdb14e"></div>
<div class="t" style="left:1821.6px;top:896.0px;font-size:14px;color:#333;text-decoration:underline;line-height:14px">Central -</div>
<div class="t" style="left:1821.6px;top:909.8px;font-size:14px;color:#333;text-decoration:underline;line-height:14px">Products</div>
<div class="t" style="left:1821.6px;top:923.5px;font-size:14px;color:#333;text-decoration:underline;line-height:14px">- Div III -</div>
<div class="t" style="left:1821.6px;top:937.2px;font-size:14px;color:#333;text-decoration:underline;line-height:14px">James</div>
<div class="t" style="left:1821.6px;top:951.0px;font-size:14px;color:#333;text-decoration:underline;line-height:14px">Numan</div>
<div class="a" style="left:1804px;top:995.7px;width:12px;height:12px;border-radius:50%;background:#f27236"></div>
<div class="t" style="left:1821.6px;top:966.0px;font-size:14px;color:#333;text-decoration:underline;line-height:14px">Central -</div>
<div class="t" style="left:1821.6px;top:979.8px;font-size:14px;color:#333;text-decoration:underline;line-height:14px">Products</div>
<div class="t" style="left:1821.6px;top:993.5px;font-size:14px;color:#333;text-decoration:underline;line-height:14px">- Div IV -</div>
<div class="t" style="left:1821.6px;top:1007.2px;font-size:14px;color:#333;text-decoration:underline;line-height:14px">Carl</div>
<div class="t" style="left:1821.6px;top:1021.0px;font-size:14px;color:#333;text-decoration:underline;line-height:14px">Douglas</div>
</body></html>
